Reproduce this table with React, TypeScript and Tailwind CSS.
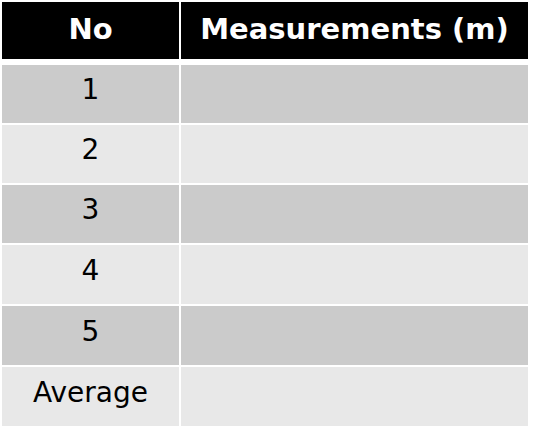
const rows = [
  { label: "1", dark: true, h: "h-[58px]" },
  { label: "2", dark: false, h: "h-[58px]" },
  { label: "3", dark: true, h: "h-[58px]" },
  { label: "4", dark: false, h: "h-[59px]" },
  { label: "5", dark: true, h: "h-[59px]" },
  { label: "Average", dark: false, h: "h-[59px]" },
];

export default function App() {
  return (
    <div className="w-[533px] h-[430px] bg-white pl-[2px] pt-[2px] font-['DejaVu_Sans',Verdana,sans-serif]">
      <div className="flex flex-col w-[526px]">
        {/* Header */}
        <div className="flex h-[57px] gap-[2px]">
          <div className="w-[177px] bg-black text-white font-bold text-[29px] leading-none pb-[3px] flex items-center justify-center">No</div>
          <div className="flex-1 bg-black text-white font-bold text-[29px] leading-none pb-[3px] flex items-center justify-center">Measurements (m)</div>
        </div>
        <div className="flex flex-col gap-[2px] mt-[6px]">
          {rows.map((r) => (
            <div key={r.label} className={`flex gap-[2px] ${r.h}`}>
              <div className={`w-[177px] flex items-center justify-center text-[28px] leading-none pb-[8px] text-black ${r.dark ? "bg-[#cbcbcb]" : "bg-[#e8e8e8]"}`}>
                {r.label}
              </div>
              <div className={`flex-1 ${r.dark ? "bg-[#cbcbcb]" : "bg-[#e8e8e8]"}`} />
            </div>
          ))}
        </div>
      </div>
    </div>
  );
}
